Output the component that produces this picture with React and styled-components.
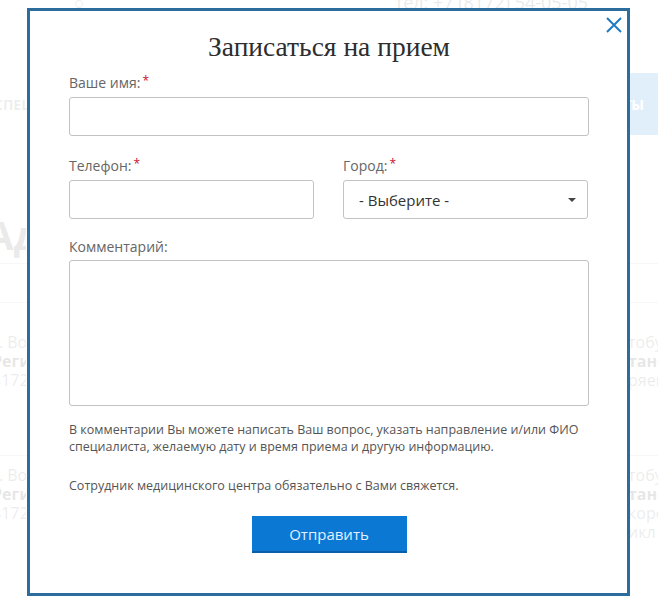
import React from 'react';
import styled, { createGlobalStyle } from 'styled-components';

const GlobalStyle = createGlobalStyle`
  html, body {
    margin: 0;
    padding: 0;
    background: #fff;
  }
  body {
    font-family: "Open Sans", "Noto Sans", sans-serif;
    color: #333;
  }
  * { box-sizing: border-box; }
`;

const Screen = styled.div`
  position: relative;
  width: 658px;
  height: 605px;
  overflow: hidden;
  background: #fff;
`;

/* ---- page behind the dialog ---- */

const Page = styled.div`
  margin-top: -10px;
  display: flex;
  flex-direction: column;
`;

const TopBar = styled.div`
  height: 83px;
  display: flex;
  justify-content: space-between;
  padding: 0 70px 0 74px;
  font-size: 18px;
  color: #555;
`;

const Nav = styled.div`
  height: 62px;
  display: flex;
  align-items: center;
  justify-content: space-between;
  font-size: 14px;
  font-weight: 700;
  color: #777;
  text-transform: uppercase;
`;

const NavItem = styled.div`
  height: 100%;
  display: flex;
  align-items: center;
  padding: 0 14px;
  margin-left: ${(p) => p.$shift || 0}px;
  background: ${(p) => (p.$active ? '#0b78d4' : 'transparent')};
  color: ${(p) => (p.$active ? '#fff' : '#777')};
`;

const SectionTitle = styled.div`
  margin: 72px 0 0 -14px;
  height: 56px;
  width: 40px;
  overflow: hidden;
  font-size: 40px;
  font-weight: 700;
  color: #555;
`;

const Divider = styled.div`
  height: 1px;
  background: #bbb;
  margin-top: ${(p) => p.$top || 0}px;
`;

const CardRow = styled.div`
  display: flex;
  justify-content: space-between;
  margin-top: ${(p) => p.$top || 0}px;
  height: ${(p) => p.$h || 110}px;
`;

const Card = styled.div`
  display: flex;
  flex-direction: column;
  font-size: 16px;
  line-height: 19px;
  margin-left: ${(p) => p.$left || 0}px;
  width: ${(p) => p.$w || 140}px;
  overflow: hidden;
  white-space: nowrap;
  color: #666;
  b { color: #333; }
`;

/* ---- dialog ---- */

const Overlay = styled.div`
  position: absolute;
  inset: 0;
  background: rgba(255, 255, 255, 0.88);
`;

const Modal = styled.div`
  position: absolute;
  left: 27px;
  top: 8px;
  width: 603px;
  height: 588px;
  background: #fff;
  border: 3px solid #2c6d9d;
  padding: 21px 38px 0 39px;
  display: flex;
  flex-direction: column;
`;

const Close = styled.button`
  position: absolute;
  right: 2px;
  top: 3px;
  width: 22px;
  height: 22px;
  padding: 0;
  border: 0;
  background: none;
  cursor: pointer;
  display: flex;
  align-items: center;
  justify-content: center;
`;

const Title = styled.h2`
  margin: 0;
  font-family: "Liberation Serif", "DejaVu Serif", serif;
  font-weight: 400;
  font-size: 27.5px;
  line-height: 30px;
  text-align: center;
  color: #2e2e2e;
`;

const Form = styled.form`
  display: flex;
  flex-direction: column;
  margin-top: 12px;
`;

const Row = styled.div`
  display: grid;
  grid-template-columns: 245px 245px;
  column-gap: 29px;
  margin-top: ${(p) => p.$top || 0}px;
`;

const Field = styled.div`
  display: flex;
  flex-direction: column;
  margin-top: ${(p) => p.$top || 0}px;
`;

const Label = styled.label`
  font-size: 14px;
  line-height: 18px;
  color: #666;
  margin-bottom: 4px;
`;

const Req = styled.span`
  color: #c8102e;
  font-size: 12px;
  margin-left: 2px;
  position: relative;
  top: -3px;
`;

const Input = styled.input`
  height: 39px;
  width: 100%;
  border: 1px solid #c3c3c3;
  border-radius: 3px;
  background: #fff;
  font: inherit;
  padding: 0 12px;
  outline: none;
`;

const Select = styled.div`
  height: 39px;
  border: 1px solid #c3c3c3;
  border-radius: 3px;
  display: flex;
  align-items: center;
  justify-content: space-between;
  padding: 0 11px 0 15px;
  font-size: 15px;
  color: #333;
`;

const Caret = styled.span`
  width: 0;
  height: 0;
  border-left: 4px solid transparent;
  border-right: 4px solid transparent;
  border-top: 4px solid #444;
`;

const TextArea = styled.textarea`
  height: 146px;
  width: 100%;
  border: 1px solid #c3c3c3;
  border-radius: 3px;
  resize: none;
  font: inherit;
  outline: none;
`;

const Note = styled.p`
  margin: ${(p) => p.$top || 0}px 0 0;
  font-size: 12.5px;
  line-height: 17px;
  color: #555;
`;

const Submit = styled.button`
  align-self: center;
  margin-top: 22px;
  width: 155px;
  height: 37px;
  border: 0;
  border-bottom: 2px solid #0a5fa8;
  background: #0b78d4;
  color: #e2f0ff;
  font-family: inherit;
  font-size: 15px;
  cursor: pointer;
`;

export default function App() {
  return (
    <Screen>
      <GlobalStyle />
      <Page>
        <TopBar>
          <span>○</span>
          <span>тел: +7 (8172) 54-05-05</span>
        </TopBar>
        <Nav>
          <NavItem $shift={-20}>Специалисты</NavItem>
          <NavItem>Услуги</NavItem>
          <NavItem>Цены</NavItem>
          <NavItem $active>Контакты</NavItem>
        </Nav>
        <SectionTitle>Адреса</SectionTitle>
        <Divider $top={0} />
        <Divider $top={38} />
        <CardRow $top={30} $h={122}>
          <Card $left={-8} $w={34}>
            <span>г. Вологда</span>
            <b>Региональный</b>
            <span>8172</span>
          </Card>
          <Card $w={30}>
            <span>тобус</span>
            <b>тано</b>
            <span>ряев</span>
          </Card>
        </CardRow>
        <Divider $top={0} />
        <CardRow $top={10} $h={140}>
          <Card $left={-8} $w={34}>
            <span>г. Вологда</span>
            <b>Региональный</b>
            <span>8172</span>
          </Card>
          <Card $w={30}>
            <span>тобус</span>
            <b>тано</b>
            <span>коре</span>
            <span>икл</span>
          </Card>
        </CardRow>
        <Divider $top={0} />
      </Page>
      <Overlay />
      <Modal>
        <Close aria-label="Закрыть">
          <svg width="16" height="16" viewBox="0 0 16 16">
            <path d="M1 1 L15 15 M15 1 L1 15" stroke="#1f7bc4" strokeWidth="2" fill="none" />
          </svg>
        </Close>
        <Title>Записаться на прием</Title>
        <Form>
          <Field>
            <Label>Ваше имя:<Req>*</Req></Label>
            <Input />
          </Field>
          <Row $top={21}>
            <Field>
              <Label>Телефон:<Req>*</Req></Label>
              <Input />
            </Field>
            <Field>
              <Label>Город:<Req>*</Req></Label>
              <Select>
                <span>- Выберите -</span>
                <Caret />
              </Select>
            </Field>
          </Row>
          <Field $top={19}>
            <Label>Комментарий:</Label>
            <TextArea />
          </Field>
          <Note $top={15}>
            В комментарии Вы можете написать Ваш вопрос, указать направление и/или ФИО
            специалиста, желаемую дату и время приема и другую информацию.
          </Note>
          <Note $top={22}>Сотрудник медицинского центра обязательно с Вами свяжется.</Note>
          <Submit type="button">Отправить</Submit>
        </Form>
      </Modal>
    </Screen>
  );
}
